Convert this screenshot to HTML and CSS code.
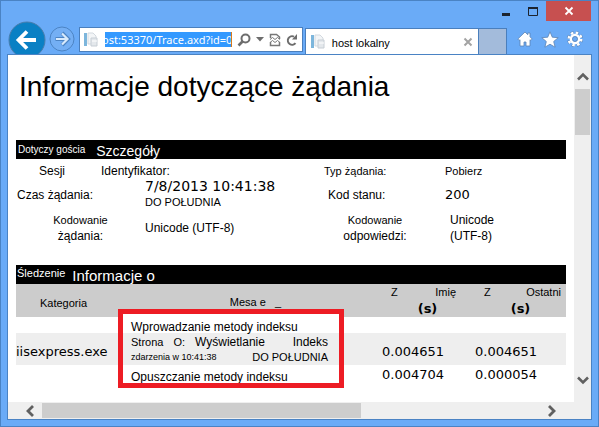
FILE: index.html
```html
<!DOCTYPE html>
<html lang="pl">
<head>
<meta charset="utf-8">
<title>host lokalny</title>
<link rel="stylesheet" href="styles.css">
</head>
<body>
<div class="window">
  <header class="titlebar">
    <button class="caption" aria-label="Minimalizuj"><svg width="12" height="12" viewBox="0 0 12 12"><path d="M2 9.500h8" stroke="#1c2430" stroke-width="3"/></svg></button>
    <button class="caption" aria-label="Maksymalizuj"><svg width="12" height="12" viewBox="0 0 12 12"><path d="M1.500 3.500h9v7h-9z" fill="none" stroke="#1c2430"/><path d="M1 3h10" stroke="#1c2430" stroke-width="2"/></svg></button>
    <button class="caption close" aria-label="Zamknij"><svg width="10" height="10" viewBox="0 0 10 10"><path d="M1.500 1.500l7 7M8.500 1.500l-7 7" stroke="#fff" stroke-width="1.800"/></svg></button>
  </header>

  <nav class="toolbar">
    <button class="nav-btn back" aria-label="Wstecz"><svg width="38" height="38" viewBox="0 0 38 38"><circle cx="19" cy="19" r="18" fill="#0a80c4" stroke="#4a7dac"/><path d="M11 19h17M19 10.500L10.500 19l8.500 8.500" fill="none" stroke="#fff" stroke-width="3.800"/></svg></button>
    <button class="nav-btn" aria-label="Dalej"><svg width="26" height="26" viewBox="0 0 26 26"><circle cx="13" cy="13" r="12" fill="#74aff4" stroke="#4c84c4"/><path d="M6.500 13h12M13 7l6 6-6 6" fill="none" stroke="#4c84c4" stroke-width="4"/><path d="M7 13h11M13 7.500l5.500 5.500-5.500 5.500" fill="none" stroke="#d8eafc" stroke-width="2.200"/></svg></button>
    <div class="address">
      <svg width="18" height="18" viewBox="0 0 18 18"><path d="M2 2h3v13H2z" fill="#7db6dc"/><path d="M6 2h5l3 3v8H6z" fill="#f3f5f7" stroke="#d3d9df"/><path d="M9 7h6v8H9z" fill="#e4e8ec" stroke="#c7ced5"/><path d="M10 10h5" stroke="#fff"/></svg>
      <input class="url" type="text" aria-label="Adres" value="ost:53370/Trace.axd?id=0">
      <button class="tool" aria-label="Szukaj"><svg width="14" height="14" viewBox="0 0 14 14"><circle cx="8.500" cy="5.500" r="4" fill="none" stroke="#6d6d6d" stroke-width="2"/><path d="M5.500 8.500L1.500 12.500" stroke="#6d6d6d" stroke-width="2.600"/></svg></button>
      <button class="tool" aria-label="Lista adresów"><svg width="8" height="5" viewBox="0 0 8 5"><path d="M0 0h8L4 4.500z" fill="#6d6d6d"/></svg></button>
      <button class="tool" aria-label="Widok zgodności"><svg width="12" height="14" viewBox="0 0 12 14"><path d="M1.500 5V1.500h6L10.500 4v2M1.500 9v3.500h9V9" fill="none" stroke="#777" stroke-width="1.500"/><path d="M1 6.500l2.500-2 2.500 2 2.500-2 2.500 2M1 9.500l2.500-2 2.500 2 2.500-2 2.500 2" fill="none" stroke="#777"/></svg></button>
      <button class="tool" aria-label="Odśwież"><svg width="12" height="14" viewBox="0 0 12 14"><path d="M9.500 10.200A4.300 4.300 0 1 1 8 3.600" fill="none" stroke="#6d6d6d" stroke-width="2"/><path d="M6 6.500h5V1z" fill="#6d6d6d"/></svg></button>
    </div>
    <div class="tab">
      <svg width="18" height="18" viewBox="0 0 18 18"><path d="M2 2h3v13H2z" fill="#7db6dc"/><path d="M6 2h5l3 3v8H6z" fill="#f3f5f7" stroke="#d3d9df"/><path d="M9 7h6v8H9z" fill="#e4e8ec" stroke="#c7ced5"/><path d="M10 10h5" stroke="#fff"/></svg>
      <span class="tab-title">host lokalny</span>
      <button class="tool" aria-label="Zamknij kartę"><svg width="10" height="10" viewBox="0 0 10 10"><path d="M1.500 1.500l7 7M8.500 1.500l-7 7" stroke="#a3a3a3" stroke-width="2"/></svg></button>
    </div>
    <button class="new-tab" aria-label="Nowa karta"></button>
    <div class="actions">
      <button class="tool" aria-label="Strona główna"><svg width="16" height="16" viewBox="0 0 16 16"><path d="M8 1L.8 8l1.400 1.400.8-.7V15h4v-4h2v4h4V8.700l.8.7L15.200 8 13 5.800V2h-2.200v1.700z" fill="#fff" stroke="#5b83b4" stroke-width=".8"/></svg></button>
      <button class="tool" aria-label="Ulubione"><svg width="18" height="17" viewBox="0 0 18 17"><path d="M9 .8l2.300 5.400 5.900.5-4.500 3.800 1.400 5.700L9 13.200l-5.100 3 1.400-5.700L.8 6.700l5.900-.5z" fill="#fff" stroke="#5b83b4" stroke-width=".8"/></svg></button>
      <button class="tool" aria-label="Narzędzia"><svg width="16" height="16" viewBox="0 0 16 16"><circle cx="8" cy="8" r="6.300" fill="none" stroke="#5b83b4" stroke-width="3.400" stroke-dasharray="2.900 2.048"/><circle cx="8" cy="8" r="6.300" fill="none" stroke="#fff" stroke-width="2.400" stroke-dasharray="2.500 2.448"/><circle cx="8" cy="8" r="4" fill="none" stroke="#fff" stroke-width="2.600"/><circle cx="8" cy="8" r="2.500" fill="none" stroke="#5b83b4" stroke-width=".8"/></svg></button>
    </div>
  </nav>

  <div class="viewport">
    <main class="page">
      <h1>Informacje dotyczące żądania</h1>

      <table class="details">
        <colgroup><col class="w-label"><col class="w-value"><col class="w-label2"><col></colgroup>
        <thead>
          <tr><th colspan="4"><span class="caption-row"><span class="tiny">Dotyczy gościa</span><span class="head">Szczegóły</span></span></th></tr>
        </thead>
        <tbody>
          <tr class="r-session">
            <th colspan="2"><span class="session"><span>Sesji</span><span>Identyfikator:</span></span></th>
            <th class="small">Typ żądania:</th>
            <td class="small">Pobierz</td>
          </tr>
          <tr class="r-time">
            <th>Czas żądania:</th>
            <td><span class="date">7/8/2013 10:41:38</span><span class="small">DO POŁUDNIA</span></td>
            <th class="inset-s">Kod stanu:</th>
            <td class="mono">200</td>
          </tr>
          <tr class="r-encoding">
            <th class="center"><span class="small">Kodowanie</span><br>żądania:</th>
            <td>Unicode (UTF-8)</td>
            <th class="center response"><span class="small">Kodowanie</span><br>odpowiedzi:</th>
            <td class="inset-s">Unicode<br>(UTF-8)</td>
          </tr>
        </tbody>
      </table>

      <section class="trace">
        <table>
          <colgroup><col class="w-cat"><col><col class="w-num"><col class="w-num"></colgroup>
          <thead>
            <tr><th class="band" colspan="4"><span class="caption-row"><span class="small">Śledzenie</span><span class="title">Informacje o</span></span></th></tr>
            <tr class="columns">
              <th class="category">Kategoria</th>
              <th class="message">Mesa e &nbsp; _</th>
              <th><span class="pair first"><span>Z</span><span>Imię</span></span><b>(s)</b></th>
              <th><span class="pair"><span>Z</span><span>Ostatni</span></span><b>(s)</b></th>
            </tr>
          </thead>
          <tbody>
            <tr><td></td><td>Wprowadzanie metody indeksu</td><td></td><td></td></tr>
            <tr class="alt">
              <td class="mono">iisexpress.exe</td>
              <td>
                <span class="line"><span class="small">Strona</span><span class="small">O:</span><span>Wyświetlanie</span><span class="end">Indeks</span></span>
                <span class="line"><span class="micro">zdarzenia w 10:41:38</span><span class="small end">DO POŁUDNIA</span></span>
              </td>
              <td class="mono">0.004651</td>
              <td class="mono">0.004651</td>
            </tr>
            <tr class="last">
              <td></td>
              <td>Opuszczanie metody indeksu</td>
              <td class="mono">0.004704</td>
              <td class="mono">0.000054</td>
            </tr>
          </tbody>
        </table>
        <div class="highlight"></div>
      </section>
    </main>

    <div class="vbar">
      <button class="tool" aria-label="W górę"><svg width="12" height="10" viewBox="0 0 12 10"><path d="M1 7.500L6 2.500l5 5" fill="none" stroke="#606060" stroke-width="2.600"/></svg></button>
      <div class="thumb"></div>
      <button class="tool down" aria-label="W dół"><svg width="12" height="10" viewBox="0 0 12 10"><path d="M1 2.500L6 7.500l5-5" fill="none" stroke="#606060" stroke-width="2.600"/></svg></button>
    </div>
    <div class="hbar">
      <button class="tool" aria-label="W lewo"><svg width="10" height="12" viewBox="0 0 10 12"><path d="M8 1L3 6l5 5" fill="none" stroke="#606060" stroke-width="2.800"/></svg></button>
      <div class="thumb"></div>
      <button class="tool right" aria-label="W prawo"><svg width="10" height="12" viewBox="0 0 10 12"><path d="M2 1l5 5-5 5" fill="none" stroke="#606060" stroke-width="2.800"/></svg></button>
    </div>
  </div>
</div>
</body>
</html>
```

FILE: styles.css
```css
* { box-sizing: border-box; }

body {
  margin: 0;
  font: 12px/16px "Liberation Sans", Arial, sans-serif;
  color: #000;
}

button {
  display: flex;
  align-items: center;
  justify-content: center;
  margin: 0;
  padding: 0;
  border: 0;
  background: none;
}

svg { display: block; flex: none; }

.window {
  display: flex;
  flex-direction: column;
  min-height: 100vh;
  padding: 0 7px 7px;
  border: 1px solid #4a83c4;
  background: #6aabf7;
}

/* Title bar */
.titlebar { display: flex; justify-content: flex-end; height: 20px; }
.caption { width: 27px; }
.close { width: 45px; background: #c75050; }

/* Toolbar */
.toolbar { display: flex; align-items: flex-end; height: 34px; }
.nav-btn { height: 32px; margin-right: 3px; }
.back { align-items: flex-start; height: 34px; overflow: hidden; }
.address {
  display: flex;
  flex: 226 1 0;
  align-items: center;
  gap: 5px;
  min-width: 0;
  height: 25px;
  margin: 0 2px 3px 1px;
  padding: 0 4px 0 2px;
  border: 1px solid #4a7fbd;
  background: #fff;
}
.url {
  flex: 1;
  min-width: 0;
  height: 15px;
  padding: 0;
  border: 0;
  border-right: 1px solid #d87a1c;
  background: #3399ff;
  color: #fff;
  font: 11px/15px "Noto Sans", sans-serif;
  text-indent: -3px;
}
.tab {
  display: flex;
  flex: 172 1 0;
  align-items: center;
  gap: 5px;
  min-width: 0;
  height: 27px;
  padding: 0 5px 0 3px;
  border: 1px solid #4a7fbd;
  border-bottom: 0;
  background: #fff;
}
.tab-title { flex: 1; padding-top: 2px; font-size: 11px; white-space: nowrap; }
.new-tab {
  width: 28px;
  height: 27px;
  border: 1px solid #4a7fbd;
  border-left: 0;
  border-bottom: 0;
  background: #a3bbdb;
}
.actions {
  display: flex;
  align-items: center;
  gap: 8px;
  height: 32px;
  padding: 0 8px 0 10px;
}

/* Content area with its scroll bars */
.viewport {
  display: grid;
  flex: 1;
  grid-template-columns: 1fr 17px;
  grid-template-rows: 1fr 17px;
  outline: 1px solid #4a83c4;
  background: #fff;
}
.vbar {
  display: flex;
  flex-direction: column;
  align-items: center;
  gap: 7px;
  padding: 17px 1px;
  background: #efefef;
}
.vbar .thumb { width: 100%; height: 46px; background: #cdcdcd; }
.down { margin-top: auto; }
.hbar {
  display: flex;
  grid-column: 1 / -1;
  align-items: center;
  gap: 7px;
  padding: 1px 34px 1px 17px;
  background: #efefef;
}
.hbar .thumb { width: 60%; height: 100%; background: #cdcdcd; }
.right { margin-left: auto; }

/* Page */
.page { padding: 13px 8px 0; }
h1 {
  margin: 0 0 34px;
  padding-left: 3px;
  font-size: 28px;
  font-weight: normal;
  line-height: 38px;
}
table { width: 100%; border-collapse: collapse; table-layout: fixed; }
th, td { padding: 0; font-weight: normal; text-align: left; }
.tiny { font-size: 10px; }
.small { font-size: 11px; }
.micro { font-size: 9px; }
.head { font-size: 14px; }
.title { font-size: 15px; }
.mono { font-family: "DejaVu Sans", Verdana, sans-serif; font-size: 13px; }
.center { text-align: center; }

thead th[colspan] { height: 19px; background: #000; color: #fff; }
.caption-row { display: flex; align-items: flex-start; height: 19px; padding-left: 1px; }
.caption-row .tiny { padding: 2px 4px 0 1px; }
.caption-row span + span { margin-left: 7px; padding: 3px 0 0; }

/* Request details */
.details { margin-bottom: 20px; }
.w-label { width: 129px; }
.w-value { width: 178px; }
.w-label2 { width: 122px; }
.details tbody th { padding-left: 1px; }
.details tbody .inset-s { padding-left: 5px; }
.session { display: flex; gap: 36px; padding-left: 22px; }
.r-session { height: 20px; }
.details .r-session th, .details .r-session td { padding-top: 3px; }
.r-time { height: 31px; }
.r-encoding { height: 35px; }
.details .center { padding: 0; }
.details .response { padding-right: 18px; }
.date { display: block; font: 14px/15px "DejaVu Sans", Verdana, sans-serif; }

/* Trace */
.trace { position: relative; }
.w-cat { width: 115px; }
.w-num { width: 93px; }
.columns { height: 33px; background: #ccc; font-size: 11px; }
.columns th { text-align: center; }
.columns .category { padding: 4px 20px 0 0; }
.columns .message { padding: 2px 0 0; }
.pair { display: flex; justify-content: space-between; padding: 0 5px 0 11px; line-height: 17px; }
.pair.first { padding-right: 17px; }
.columns b { display: block; padding-left: 2px; font: bold 13px/16px "DejaVu Sans", Verdana, sans-serif; }
.trace tbody td { height: 16px; padding-top: 4px; line-height: 12px; }
.trace tbody .alt { background: #eee; }
.trace tbody .alt td { height: 32px; padding-top: 2px; line-height: 15px; }
.trace tbody .alt .mono { padding-top: 4px; }
.trace tbody .last td { padding-top: 4px; vertical-align: top; }
.trace tbody .last td:nth-child(2) { padding-top: 6px; }
.trace tbody td + .mono { padding-left: 2px; }
.line { display: flex; gap: 10px; padding-right: 52px; }
.line .end { margin-left: auto; }
.highlight {
  position: absolute;
  top: 44px;
  left: 102px;
  width: 226px;
  height: 79px;
  border: 5px solid #ed1c24;
  box-shadow: inset 0 3px #fff;
}
```
